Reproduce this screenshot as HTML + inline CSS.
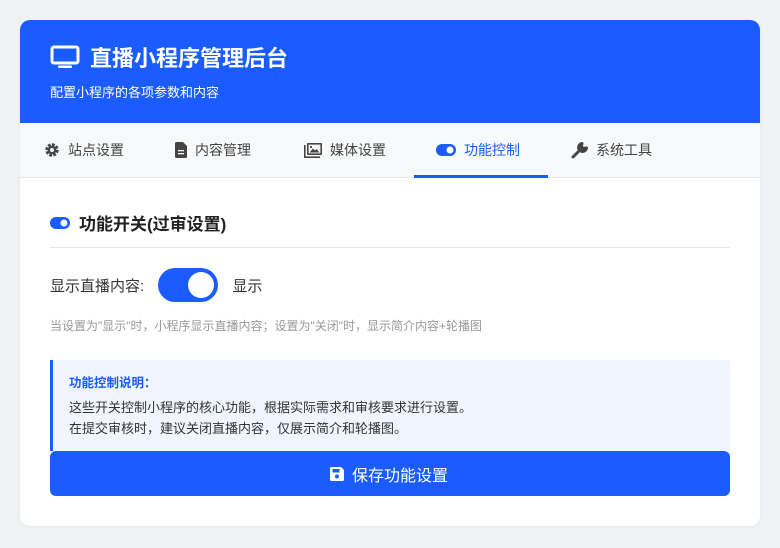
<!DOCTYPE html>
<html><head><meta charset="utf-8"><style>
*{box-sizing:border-box;margin:0;padding:0}
body{width:780px;height:548px;background:#f0f2f5;font-family:"Liberation Sans","Noto Sans CJK SC",sans-serif;position:relative;overflow:hidden}
.card{position:absolute;left:20px;top:20px;width:740px;height:506px;background:#fff;border-radius:10px;overflow:hidden;box-shadow:0 1px 4px rgba(0,0,0,.05)}
.hd{height:103px;background:#1a5cff;color:#fff;position:relative}
.hd h1{position:absolute;left:30px;top:21px;font-size:22px;font-weight:bold;display:flex;align-items:center;gap:10px}
.hd p{position:absolute;left:30px;top:62px;font-size:13px}
.tabs{height:55px;background:#f8f9fa;border-bottom:1px solid #e5e7eb;position:relative}
.tab{position:absolute;top:0;height:55px;display:flex;align-items:center;gap:8px;font-size:14px;color:#444;padding-bottom:1px}
.tab.on{color:#1a5cff;border-bottom:3px solid #1a5cff;justify-content:center;padding-top:2px;padding-right:6px}
.sec{position:absolute;left:30px;top:190px;font-size:17px;font-weight:bold;color:#222;display:flex;align-items:center;gap:9px}
.hr{position:absolute;left:30px;right:30px;top:227px;border-top:1px solid #e5e7eb}
.row{position:absolute;left:30px;top:248px;height:34px;display:flex;align-items:center;font-size:15px;color:#333}
.tg{width:60px;height:34px;border-radius:17px;background:#1a5cff;position:relative;margin:0 10px 0 14px}
.tg:after{content:"";position:absolute;right:4px;top:4px;width:26px;height:26px;border-radius:50%;background:#fff}
.hint{position:absolute;left:30px;top:297px;font-size:12px;color:#999}
.info{position:absolute;left:30px;right:30px;top:340px;height:91px;background:#f0f5ff;border-left:3px solid #1a5cff;padding:13px 0 0 16px;font-size:13px;color:#333;line-height:21px}
.info b{color:#1a5cff;font-size:12.5px;display:block;margin-bottom:3px}
.btn{position:absolute;left:30px;right:30px;top:431px;height:45px;background:#1a5cff;border-radius:6px;color:#fff;font-size:16px;display:flex;align-items:center;justify-content:center;gap:8px;padding-right:2px}
</style></head><body>
<div class="card">
<div class="hd"><h1><svg width="30" height="24" viewBox="0 0 30 24"><rect x="2" y="2" width="26" height="16" rx="2" fill="none" stroke="#fff" stroke-width="3"/><rect x="8" y="20.5" width="14" height="2.5" rx="1" fill="#fff"/></svg>直播小程序管理后台</h1><p>配置小程序的各项参数和内容</p></div>
<div class="tabs">
<div class="tab" style="left:24px"><svg width="16" height="16" viewBox="0 0 16 16"><circle cx="8" cy="8" r="5" fill="none" stroke="#444" stroke-width="3.4" stroke-dasharray="2.6 1.3"/><circle cx="8" cy="8" r="4.5" fill="#444"/><circle cx="8" cy="8" r="2" fill="#f8f9fa"/></svg>站点设置</div>
<div class="tab" style="left:155px"><svg width="12" height="16" viewBox="0 0 12 16"><path d="M0 1.5Q0 0 1.5 0H8L12 4V14.5Q12 16 10.5 16H1.5Q0 16 0 14.5Z" fill="#444"/><rect x="3" y="8" width="6" height="1.3" fill="#f8f9fa"/><rect x="3" y="11" width="6" height="1.3" fill="#f8f9fa"/></svg>内容管理</div>
<div class="tab" style="left:284px"><svg width="18" height="15" viewBox="0 0 18 15"><rect x="0" y="2" width="1.6" height="13" fill="#444"/><rect x="0" y="13.4" width="16" height="1.6" fill="#444"/><rect x="3" y="0" width="15" height="12" rx="1" fill="#444"/><rect x="4.6" y="1.6" width="11.8" height="8.8" fill="#f8f9fa"/><path d="M5.5 9.5L9 5.5 11 7.5 12.5 6 15.5 9.5Z" fill="#444"/><circle cx="7" cy="4" r="1.1" fill="#444"/></svg>媒体设置</div>
<div class="tab on" style="left:394px;width:134px"><svg width="20" height="12" viewBox="0 0 20 12"><rect width="20" height="12" rx="6" fill="#1a5cff"/><circle cx="14" cy="6" r="3.5" fill="#fff"/></svg>功能控制</div>
<div class="tab" style="left:551px"><svg width="17" height="17" viewBox="0 0 17 17"><path d="M2 15L9 8M11 1.5A4 4 0 1 0 15.5 6L13 6.5 11 6 10.5 4Z" fill="#444" stroke="#444" stroke-width="3" stroke-linecap="round" stroke-linejoin="round"/></svg>系统工具</div>
</div>
<div class="sec"><svg width="20" height="12" viewBox="0 0 20 12"><rect width="20" height="12" rx="6" fill="#1a5cff"/><circle cx="14" cy="6" r="3.5" fill="#fff"/></svg>功能开关(过审设置)</div>
<div class="hr"></div>
<div class="row">显示直播内容:<div class="tg"></div>&nbsp;显示</div>
<div class="hint">当设置为"显示"时，小程序显示直播内容；设置为"关闭"时，显示简介内容+轮播图</div>
<div class="info"><b>功能控制说明：</b>这些开关控制小程序的核心功能，根据实际需求和审核要求进行设置。<br>在提交审核时，建议关闭直播内容，仅展示简介和轮播图。</div>
<div class="btn"><svg width="14" height="14" viewBox="0 0 14 14"><path d="M0 1.5Q0 0 1.5 0H11L14 3V12.5Q14 14 12.5 14H1.5Q0 14 0 12.5Z" fill="#fff"/><rect x="2.5" y="2" width="7" height="3.5" fill="#1a5cff"/><circle cx="7" cy="9.5" r="2" fill="#1a5cff"/></svg>保存功能设置</div>
</div>
</body></html>
